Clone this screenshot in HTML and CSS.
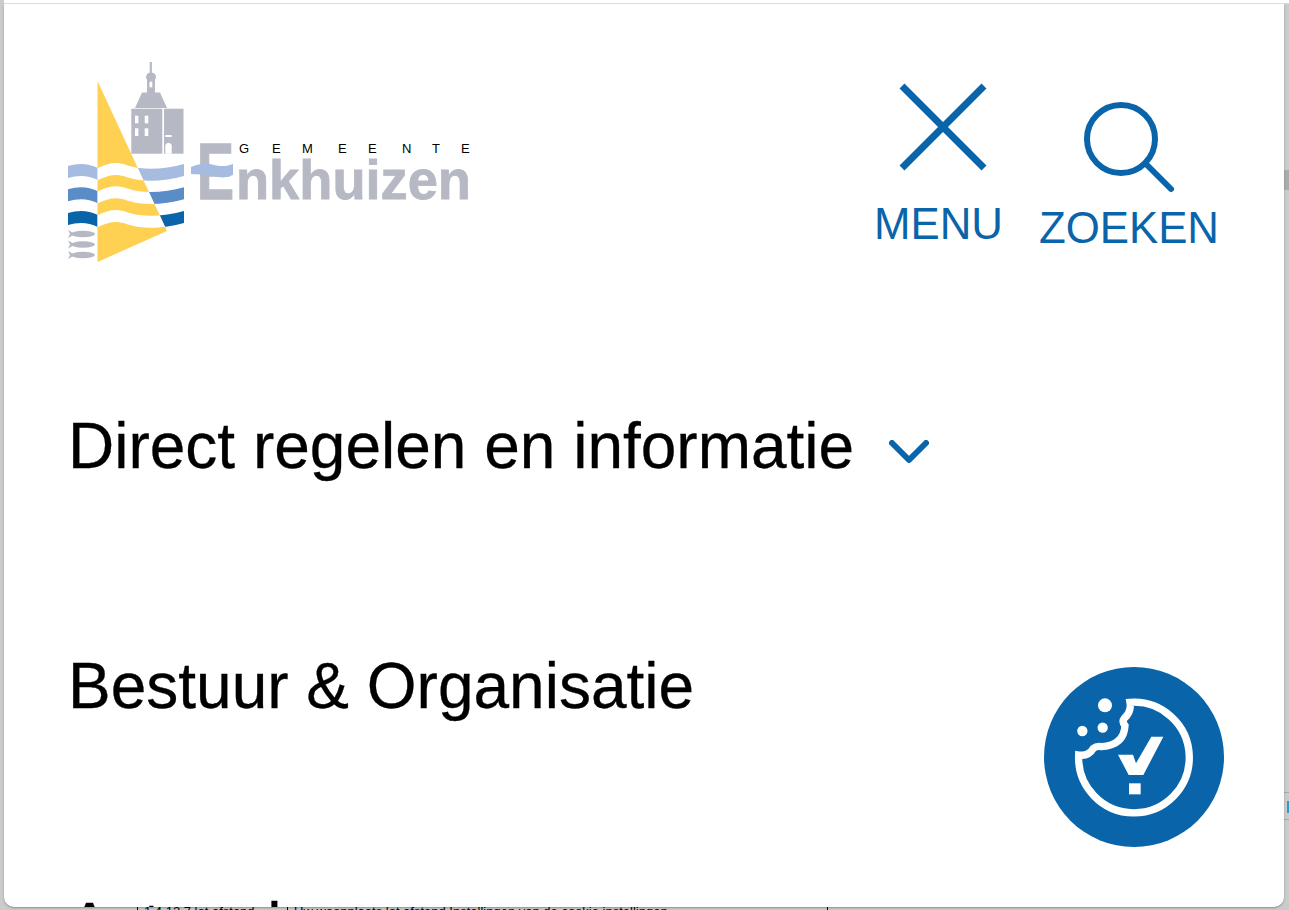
FILE: index.html
```html
<!DOCTYPE html>
<html lang="nl">
<head>
  <meta charset="UTF-8" />
  <meta name="viewport" content="width=device-width, initial-scale=1.0"/>
  <title>Gemeente Enkhuizen</title>
  <link rel="stylesheet" href="styles.css">
</head>
<body>
  <div class="top-strip"></div>

  <div class="middle">
    <div class="edge-left"></div>

    <div class="panel">
      <!-- Header -->
      <header class="site-header">
        <svg class="logo" viewBox="60 55 420 215" role="img" aria-label="Gemeente Enkhuizen">
          <defs>
            <path id="wave" d="M68 166C78 163 88 163 98 168C104 165 110 163 116 163C124 163 130 167 139 168C152 170 170 168 184 164V176C170 180 152 182 139 180C130 179 124 175 116 175C110 175 104 177 98 180C88 175 78 175 68 178Z" />
            <clipPath id="sailClip">
              <polygon points="97.5,81 167,231 97.5,262" />
            </clipPath>
            <g id="fish">
              <ellipse cx="83" cy="234" rx="12" ry="3.300" />
              <polygon points="68,230 75,234 68,238 70,234" />
            </g>
          </defs>

          <!-- tower -->
          <g class="logo-grey">
            <rect x="149.700" y="62" width="2.200" height="12" />
            <ellipse cx="151" cy="77" rx="5" ry="4.500" />
            <polygon points="135,108 142,92.500 147,92.500 147,78 155,78 155,92.500 160,92.500 167,108" />
            <rect x="131.300" y="108.700" width="31" height="45" />
            <rect x="164" y="108.700" width="19.500" height="45" />
          </g>
          <g class="logo-white">
            <rect x="149.500" y="81.700" width="2.800" height="5.600" />
            <rect x="135" y="115.700" width="3.400" height="7.600" />
            <rect x="144.700" y="115.700" width="3.600" height="7.600" />
            <rect x="135" y="128.300" width="3.400" height="7.700" />
            <rect x="144.700" y="128.300" width="3.600" height="7.700" />
            <rect x="165.300" y="135" width="6.400" height="2" />
            <path d="M165.300 153.700V145Q168.500 140.500 171.700 145V153.700Z" />
          </g>

          <!-- waves behind the sail -->
          <use href="#wave" class="wave-light" />
          <use href="#wave" class="wave-mid" y="23.300" />
          <use href="#wave" class="wave-dark" y="47" />

          <polygon class="sail" points="97.500,81 167,231 97.500,262" />
          <g clip-path="url(#sailClip)" class="logo-white">
            <use href="#wave" />
            <use href="#wave" y="23.300" />
            <use href="#wave" y="47" />
          </g>

          <g class="logo-grey">
            <use href="#fish" />
            <use href="#fish" y="10.500" />
            <use href="#fish" y="21" />
          </g>

          <!-- wordmark -->
          <text class="word-e" x="197" y="199" textLength="37" lengthAdjust="spacingAndGlyphs">E</text>
          <path class="wave-light" d="M191 167C200 163 208 163 214 165C222 167 228 166 233 164V175C226 178 220 178 214 176C206 174 200 175 191 174Z" />
          <text class="word-rest" x="236" y="199" textLength="235" lengthAdjust="spacingAndGlyphs">nkhuizen</text>
          <text class="word-small" x="239 272 302 338 368 402 432 461" y="153">GEMEENTE</text>
        </svg>

        <div class="header-actions">
          <a class="action action-menu" href="#">
            <svg class="menu-icon" viewBox="0 0 90 90">
              <path d="M4 4L86 86M86 4L4 86" />
            </svg>
            <span>MENU</span>
          </a>
          <a class="action action-search" href="#">
            <svg class="search-icon" viewBox="0 0 92 92">
              <circle cx="37" cy="37" r="34" />
              <path d="M62 62L87 87" />
            </svg>
            <span>ZOEKEN</span>
          </a>
        </div>
      </header>

      <!-- Menu items -->
      <nav class="main-nav">
        <a class="nav-item" href="#">
          Direct regelen en informatie
          <svg class="chevron" viewBox="0 0 40 24"><path d="M3 3L20 20L37 3" /></svg>
        </a>
        <a class="nav-item" href="#">Bestuur &amp; Organisatie</a>
        <a class="nav-item" href="#">Actueel</a>
      </nav>

      <!-- Cookie button -->
      <button class="cookie-btn" aria-label="Cookie instellingen">
        <svg viewBox="42 36 540 540">
          <circle class="cookie-bg" cx="312" cy="306" r="270" />
          <path class="cookie-ring" d="M146 300A166 166 0 1 0 300 142Q305 170 283 190Q275 200 285 212Q282 270 215 275Q200 272 190 280Q175 305 146 300Z" />
          <circle class="cookie-dot" cx="225" cy="151" r="21" />
          <circle class="cookie-dot" cx="218" cy="218" r="15.500" />
          <circle class="cookie-dot" cx="157" cy="228" r="15.500" />
          <polygon class="cookie-dot" points="264,299 309,299 318,325 364,245 400,245 340,360 296,360" />
          <rect class="cookie-dot" x="297" y="385" width="35" height="33" />
        </svg>
      </button>
    </div>

    <div class="edge-right">
      <div class="edge-dark"></div>
      <div class="edge-row">
        <div class="edge-blue"></div>
      </div>
    </div>
  </div>

  <div class="bottom-strip">
    <span class="behind-cell behind-one">1 4 12 7 lot afstand</span>
    <span class="behind-cell behind-two">Uw woonplaats lot afstand Installingen van de cookie instellingen</span>
    <span class="behind-cell behind-three"></span>
  </div>
</body>
</html>
```

FILE: styles.css
```css
html, body {
  margin: 0;
  height: 100%;
}

body {
  display: flex;
  flex-direction: column;
  height: 910px;
  overflow: hidden;
  background-color: #cbcbcb;
  font-family: "Liberation Sans", Arial, sans-serif;
  color: #000;
}

a {
  color: inherit;
  text-decoration: none;
}

.top-strip {
  height: 3px;
  margin-left: 4px;
  background-color: #fff;
  border-bottom: 1px solid #dcdcdc;
  flex-shrink: 0;
  z-index: 1;
}

.middle {
  display: flex;
  height: 903px;
  flex-shrink: 0;
}

.edge-left {
  width: 4px;
  flex-shrink: 0;
}

.panel {
  position: relative;
  width: 1280px;
  flex-shrink: 0;
  overflow: hidden;
  background-color: #fff;
  border-radius: 0 0 10px 10px;
  box-shadow: 0 1px 2px rgba(0, 0, 0, 0.3);
}

/* Header */
.site-header {
  display: flex;
  justify-content: space-between;
  align-items: flex-start;
  padding: 51px 65px 0 56px;
  height: 215px;
}

.logo {
  width: 420px;
  height: 215px;
  display: block;
}

.logo-grey { fill: #b6b9c3; }
.logo-white { fill: #fff; }
.sail { fill: #fed152; }
.wave-light { fill: #a5bbe0; }
.wave-mid { fill: #5a8cc8; }
.wave-dark { fill: #0a64aa; }

.word-e,
.word-rest {
  font-weight: 700;
  fill: #b6b9c3;
  stroke: #b6b9c3;
}

.word-e {
  font-size: 79px;
  stroke-width: 1.500;
}

.word-rest {
  font-size: 56px;
  stroke-width: 0.800;
}

.word-small {
  font-size: 13px;
  fill: #000;
}

.header-actions {
  display: flex;
  align-items: flex-start;
  gap: 36px;
}

.action {
  display: flex;
  flex-direction: column;
  align-items: center;
  color: #0a64aa;
  font-size: 43.800px;
  line-height: 50px;
}

.action svg {
  display: block;
  fill: none;
  stroke: #0a64aa;
}

.menu-icon {
  width: 90px;
  height: 90px;
  margin: 27px 0 0 9px;
  stroke-width: 7;
}

.search-icon {
  width: 92px;
  height: 92px;
  margin: 47px 0 0 2px;
  stroke-width: 6;
  stroke-linecap: round;
}

.action-menu span { margin-top: 27px; }
.action-search span { margin-top: 9px; }

/* Menu items */
.main-nav {
  display: flex;
  flex-direction: column;
  padding: 141px 0 0 64px;
  gap: 170px;
}

.nav-item {
  display: flex;
  align-items: center;
  gap: 35px;
  font-size: 64px;
  line-height: 70px;
  -webkit-text-stroke: 0.3px #000;
}

.chevron {
  width: 40px;
  height: 24px;
  margin-top: 12px;
  fill: none;
  stroke: #0a64aa;
  stroke-width: 6;
  stroke-linecap: round;
  stroke-linejoin: round;
}

/* Cookie button */
.cookie-btn {
  position: absolute;
  top: 663px;
  right: 60px;
  width: 180px;
  height: 180px;
  padding: 0;
  border: none;
  background: none;
  cursor: pointer;
}

.cookie-btn svg {
  display: block;
  width: 180px;
  height: 180px;
}

.cookie-bg { fill: #0a64aa; }
.cookie-dot { fill: #fff; }

.cookie-ring {
  fill: none;
  stroke: #fff;
  stroke-width: 22;
}

/* Page behind the panel */
.edge-right {
  flex: 1;
  padding-top: 166px;
}

.edge-dark {
  height: 20px;
  background-color: #ababab;
}

.edge-row {
  height: 28px;
  margin-top: 602px;
  padding-top: 8px;
  box-sizing: border-box;
  border-top: 1px solid #aaa;
  border-bottom: 1px solid #aaa;
}

.edge-blue {
  width: 2px;
  height: 12px;
  margin-left: 3px;
  background-color: #2a9ad0;
}

.bottom-strip {
  display: flex;
  height: 4px;
  overflow: hidden;
  font-size: 13px;
  line-height: 12px;
  flex-shrink: 0;
}

.behind-cell {
  display: block;
  height: 16px;
  padding-left: 6px;
  border-left: 1px solid #000;
  white-space: nowrap;
  margin-top: -1px;
  box-sizing: border-box;
}

.behind-one {
  margin-left: 137px;
  width: 150px;
}

.behind-two { width: 540px; }
.behind-three { width: 100px; }
```
